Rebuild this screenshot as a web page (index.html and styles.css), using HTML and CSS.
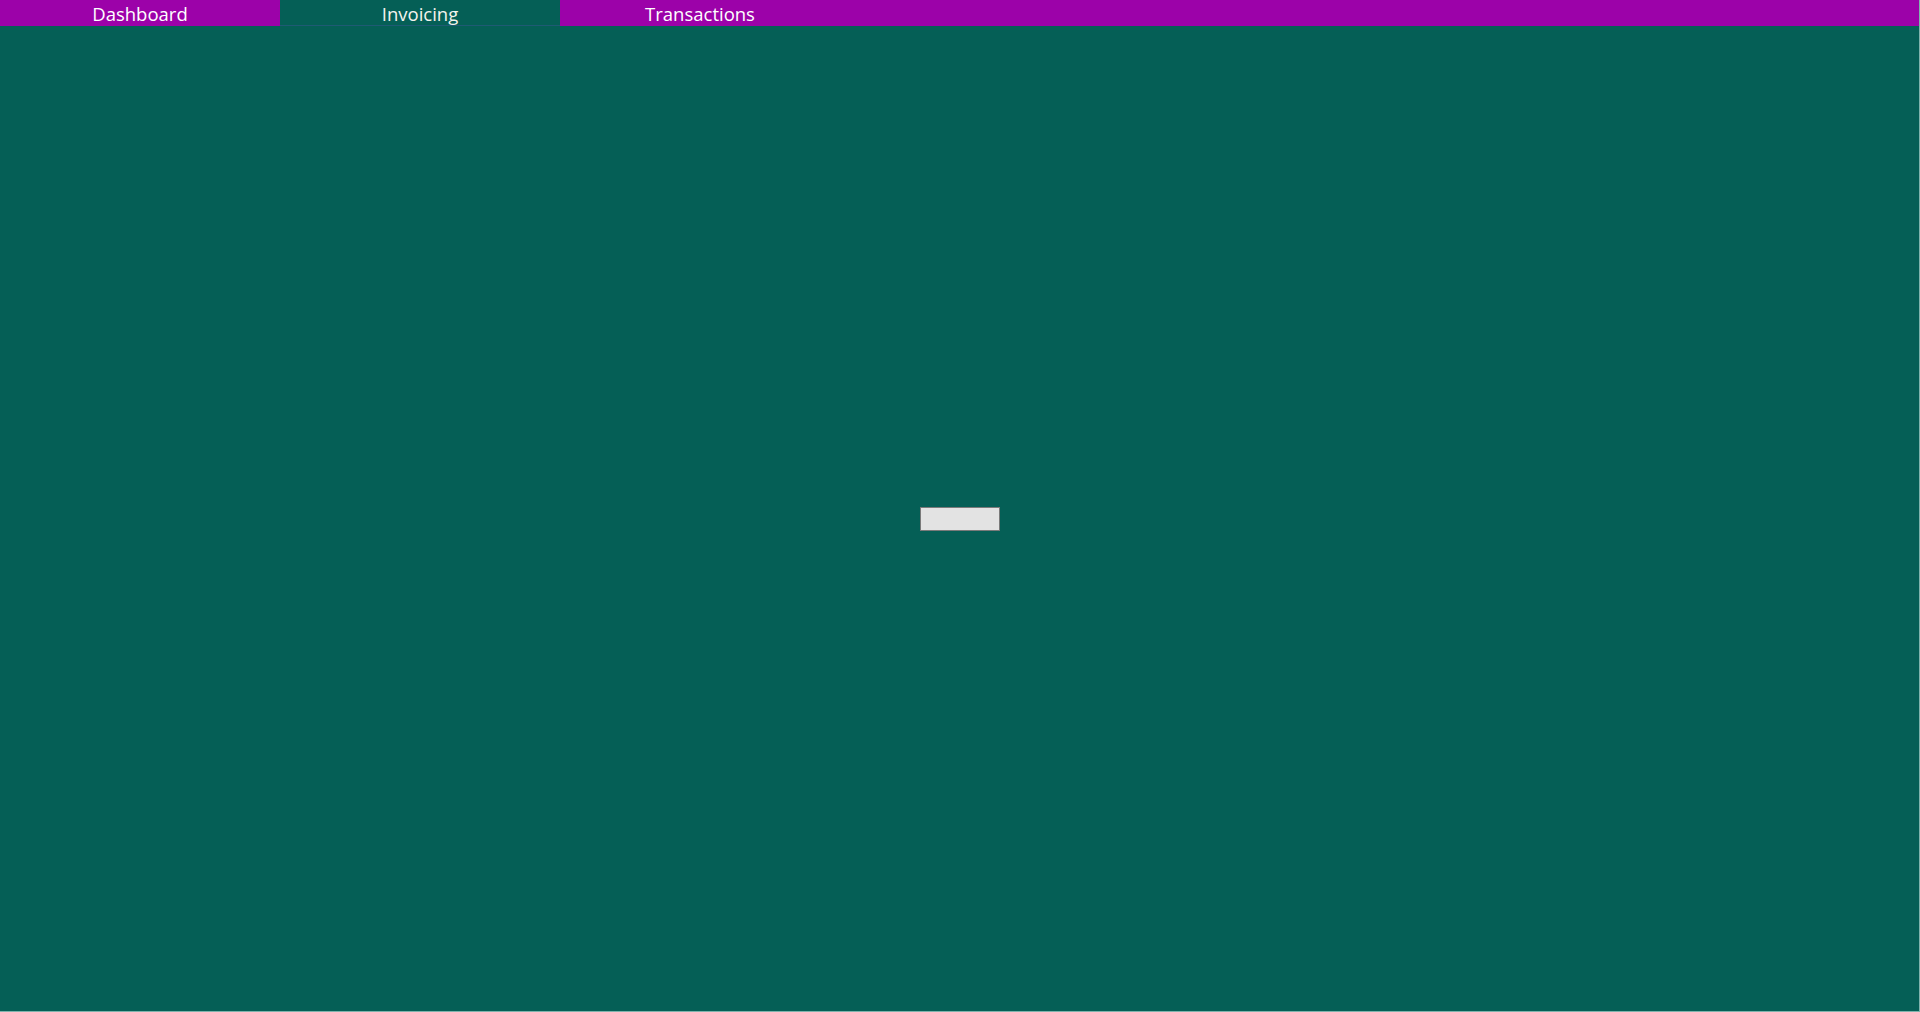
FILE: index.html
```html
<!DOCTYPE html>
<html lang="en">
<head>
<meta charset="utf-8">
<title>Invoicing</title>
<link rel="stylesheet" href="styles.css">
</head>
<body>
<div class="app">
  <nav class="tabs">
    <div class="tab">Dashboard</div>
    <div class="tab active">Invoicing</div>
    <div class="tab">Transactions</div>
  </nav>
  <main class="content">
    <button class="btn" type="button"></button>
  </main>
  <div class="edge-bottom"></div>
</div>
</body>
</html>
```

FILE: styles.css
```css
html, body {
  margin: 0;
  padding: 0;
  height: 100%;
}
body {
  background: #055f56;
  font-family: "Open Sans", "Noto Sans", "Liberation Sans", sans-serif;
  overflow: hidden;
}
.app {
  display: flex;
  flex-direction: column;
  height: 1012px;
  width: 1920px;
  box-sizing: border-box;
  border-right: 1px solid #7fb3ad;
}
.tabs {
  display: flex;
  height: 26px;
  background: #9c02a9;
  flex: 0 0 auto;
}
.tab {
  width: 280px;
  height: 26px;
  box-sizing: border-box;
  padding-top: 2px;
  display: flex;
  align-items: center;
  justify-content: center;
  color: #ffffff;
  font-size: 18.5px;
  line-height: 24px;
}
.tab.active {
  background: #055f56;
  border-bottom: 1px solid #1f5a74;
  color: #f4f4ee;
}
.content {
  flex: 1 1 auto;
  display: flex;
  align-items: center;
  justify-content: center;
  background: #055f56;
}
.btn {
  width: 80px;
  height: 24px;
  padding: 0;
  background: #e3e3e3;
  border: 1px solid #7a7a7a;
  border-radius: 0;
}
.edge-bottom {
  height: 1px;
  background: #7fb3ad;
  flex: 0 0 auto;
}
```
